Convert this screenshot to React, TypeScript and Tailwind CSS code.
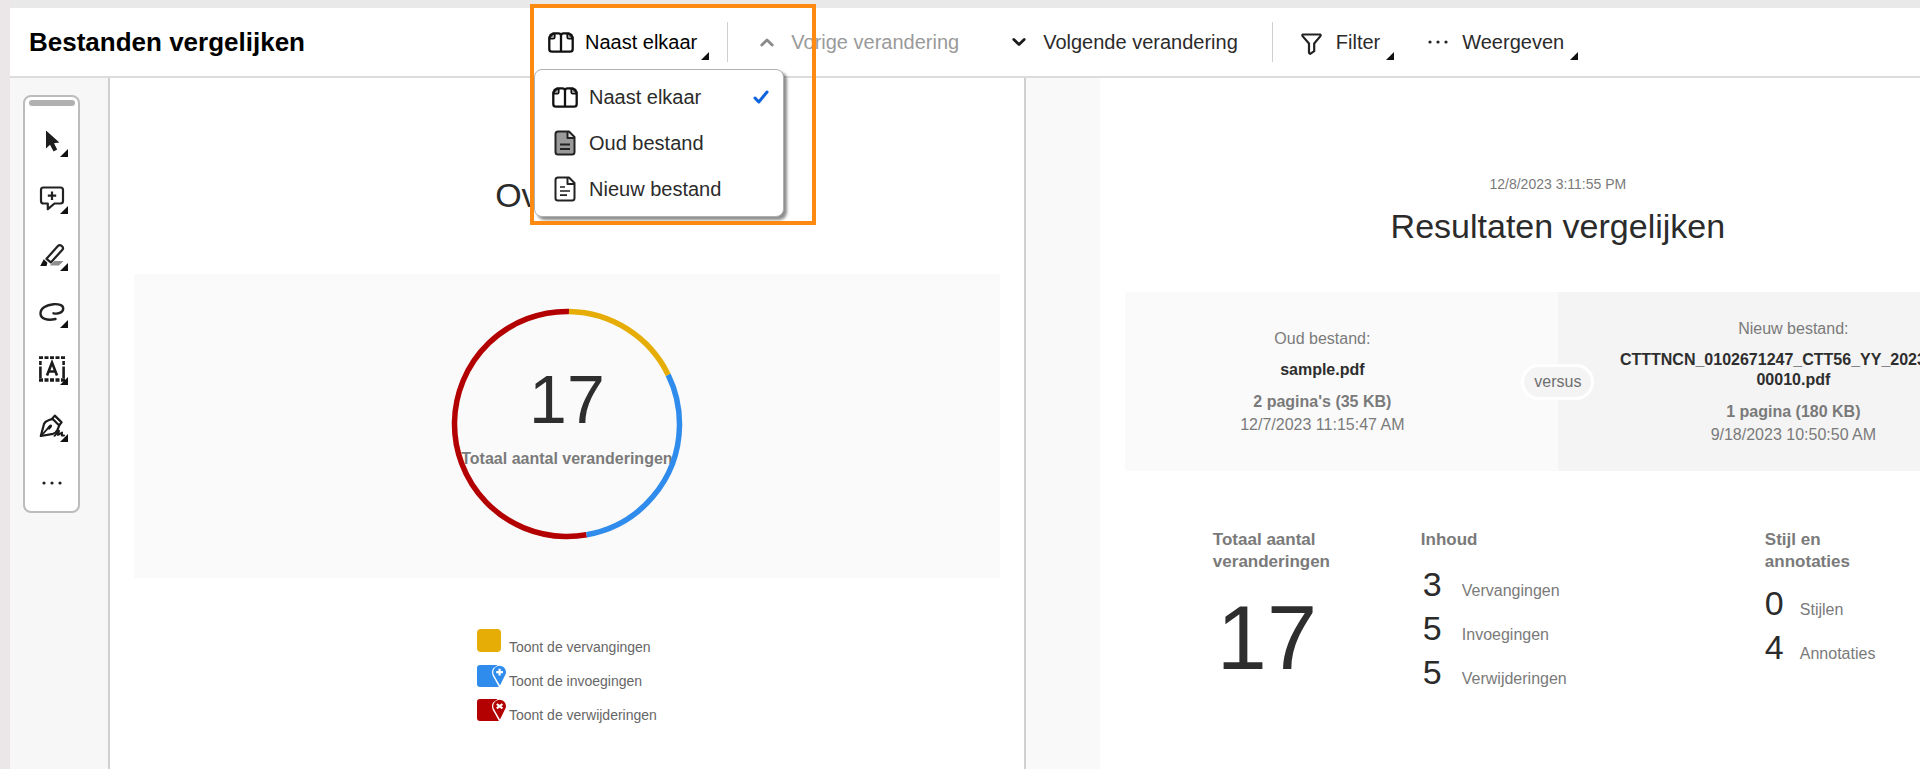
import React from 'react';

type IconProps = { className?: string };

function Corner({ className = '' }: IconProps) {
  return (
    <svg viewBox="0 0 8 8" className={`w-2 h-2 shrink-0 ${className}`} fill="#111" aria-hidden="true">
      <path d="M8 0v8H0z" />
    </svg>
  );
}

function SideBySideIcon() {
  return (
    <svg viewBox="0 0 26 21" className="w-[26px] h-[21px] shrink-0" fill="none" stroke="#111" strokeWidth="2.3" strokeLinejoin="round" aria-hidden="true">
      <path d="M2 6.8H5.2Q6.8 6.8 6.8 5.2V2H4Q2 2 2 4ZM24 6.8H20.8Q19.2 6.8 19.2 5.2V2H22Q24 2 24 4Z" fill="#999" strokeWidth="1.6" />
      <path d="M13 3V19.5" />
      <path d="M13 3.4Q12.6 1.3 10.5 1.3H5.2L1.3 5.2V17Q1.3 19.7 4 19.7H22Q24.7 19.7 24.7 17V5.2L20.8 1.3H15.5Q13.4 1.3 13 3.4Z" />
    </svg>
  );
}

function OldFileIcon() {
  return (
    <svg viewBox="0 0 26 26" className="w-[26px] h-[26px] shrink-0" fill="none" stroke="#222" strokeWidth="2" strokeLinejoin="round" aria-hidden="true">
      <path d="M6.5 1.5H17L22.5 7V22Q22.5 24.5 20 24.5H6Q3.5 24.5 3.5 22V4Q3.5 1.5 6 1.5Z" fill="#9a9a9a" />
      <path d="M15.5 2V8H22" fill="#ddd" />
      <path d="M8 14.5H18M8 19H18" strokeWidth="1.8" />
    </svg>
  );
}

function NewFileIcon() {
  return (
    <svg viewBox="0 0 26 26" className="w-[26px] h-[26px] shrink-0" fill="none" stroke="#222" strokeWidth="2" strokeLinejoin="round" aria-hidden="true">
      <path d="M6.5 1.5H17L22.5 7V22Q22.5 24.5 20 24.5H6Q3.5 24.5 3.5 22V4Q3.5 1.5 6 1.5Z" />
      <path d="M15.5 2V8H22" />
      <path d="M8 11H13M8 15H18M8 19.2H15" strokeWidth="1.7" />
    </svg>
  );
}

function Chevron({ up = false }: { up?: boolean }) {
  return (
    <svg viewBox="0 0 14 10" className="w-3.5 h-2.5 shrink-0" fill="none" stroke={up ? '#8a8a8a' : '#1b1b1b'} strokeWidth="2.8" strokeLinecap="round" strokeLinejoin="round" aria-hidden="true">
      <path d={up ? 'M1.8 8L7 3L12.2 8' : 'M1.8 2.5L7 7.5L12.2 2.5'} />
    </svg>
  );
}

function FilterIcon() {
  return (
    <svg viewBox="0 0 21 22" className="w-[21px] h-[22px] mt-1 shrink-0" fill="none" stroke="#222" strokeWidth="2.2" strokeLinejoin="round" aria-hidden="true">
      <path d="M1.6 1.5H19.4Q20 2.4 19.2 3.4L13.2 10.5V18.2L9.2 20.8Q8 20.6 8 19.6V10.5L1.8 3.4Q1 2.4 1.6 1.5Z" />
    </svg>
  );
}

function Dots() {
  return (
    <svg viewBox="0 0 20 4" className="w-5 h-1 shrink-0" fill="#222" aria-hidden="true">
      <circle cx="2" cy="2" r="1.6" />
      <circle cx="10" cy="2" r="1.6" />
      <circle cx="18" cy="2" r="1.6" />
    </svg>
  );
}

const viewOptions = [
  { label: 'Naast elkaar', icon: <SideBySideIcon />, active: true },
  { label: 'Oud bestand', icon: <OldFileIcon />, active: false },
  { label: 'Nieuw bestand', icon: <NewFileIcon />, active: false }
];

const tools = [
  {
    label: 'Selecteren',
    drawing: <path d="M7 2.5V20.5L11 16.8L14.6 23.4L18.2 21.6L15 15.2L20.4 14.4Z" fill="#1d1d1d" />
  },
  {
    label: 'Opmerking toevoegen',
    drawing: (
      <g fill="none" stroke="#222" strokeWidth="2.2">
        <path d="M4.5 2.5H21.5Q24 2.5 24 5V16Q24 18.5 21.5 18.5H15.5L8.8 24.2V18.5H4.5Q2 18.5 2 16V5Q2 2.5 4.5 2.5Z" strokeLinejoin="round" />
        <path d="M13 6.5V15M8.8 10.7H17.2" />
      </g>
    )
  },
  {
    label: 'Markeren',
    drawing: (
      <g>
        <path d="M15.5 19H24.5L20 23.5H10.5Z" fill="#8f8f8f" />
        <path d="M7.5 16.8L18.9 4Q20.6 2.2 22.6 3.9L23 4.2Q25 6 23.2 8L11.8 20.4Z" fill="none" stroke="#222" strokeWidth="2.2" strokeLinejoin="round" />
        <path d="M4.8 17.2L8.4 20.8L7.6 24H1.2Z" fill="#111" />
      </g>
    )
  },
  {
    label: 'Lasso',
    drawing: (
      <path d="M14.5 14.3C20 15.5 24.2 13 24.2 9.4C24.2 6 19.5 4.8 14.5 5.2C7.5 5.8 1.5 9 1.5 14.5C1.5 19.5 8 22 16.5 20" fill="none" stroke="#222" strokeWidth="2.4" strokeLinecap="round" />
    )
  },
  {
    label: 'Tekst toevoegen',
    drawing: (
      <g fill="none" stroke="#1b1b1b">
        <path d="M0 1.6H26" strokeWidth="2.6" strokeDasharray="4 1.5" />
        <path d="M0 24H26" strokeWidth="3.6" strokeDasharray="4 1.5" />
        <path d="M1.4 5V9M1.4 10.5V22M24.6 5V9M24.6 10.5V22" strokeWidth="2.6" />
        <path d="M8 19.5L13 6.5L18 19.5M9.6 15.5H16.4" strokeWidth="2.6" />
      </g>
    )
  },
  {
    label: 'Ondertekenen',
    drawing: (
      <g fill="none" stroke="#1b1b1b" strokeWidth="2.2" strokeLinejoin="round" strokeLinecap="round">
        <path d="M1.8 23L5 11Q6 8.5 9 7.5L13.5 5.8L20.2 12.6L18.4 17Q17 20 14 20.8Z" />
        <path d="M13.4 5.4L15.8 2.6L22.6 9.4L20.4 12" />
        <path d="M2 23L10.2 13.8" strokeWidth="1.8" />
        <path d="M10 15L11.6 13" strokeWidth="3" />
        <path d="M15.5 22.8L20 17.8L19 22L23 19.6L22.8 22.6H25" strokeWidth="2" />
      </g>
    )
  }
];

const legend = [
  {
    label: 'Toont de vervangingen',
    drawing: <rect x="0" y="0" width="24" height="23" rx="4" fill="#e5ad05" />
  },
  {
    label: 'Toont de invoegingen',
    drawing: (
      <g>
        <path d="M3 2H22V24H3Q0 24 0 21V5Q0 2 3 2Z" fill="#2f8cec" />
        <path d="M22.5 25L17 15Q13.6 10 16 5.5L22 1H24V25Z" fill="#fff" />
        <path d="M23 22.5L17.8 13.4A6.4 6.4 0 1 1 27.4 13.4Z" fill="#2f8cec" />
        <path d="M22.6 5.7V12.5M19.2 9.1H26" stroke="#fff" strokeWidth="2.2" />
      </g>
    )
  },
  {
    label: 'Toont de verwijderingen',
    drawing: (
      <g>
        <path d="M3 2H22V24H3Q0 24 0 21V5Q0 2 3 2Z" fill="#b30000" />
        <path d="M22.5 25L17 15Q13.6 10 16 5.5L22 1H24V25Z" fill="#fff" />
        <path d="M23 22.5L17.8 13.4A6.4 6.4 0 1 1 27.4 13.4Z" fill="#b30000" />
        <path d="M19.8 7L25.4 11.4M25.4 7L19.8 11.4" stroke="#fff" strokeWidth="2.2" />
      </g>
    )
  }
];

const content = [
  { count: 3, label: 'Vervangingen' },
  { count: 5, label: 'Invoegingen' },
  { count: 5, label: 'Verwijderingen' }
];

const styles = [
  { count: 0, label: 'Stijlen' },
  { count: 4, label: 'Annotaties' }
];

function ViewMenu() {
  return (
    <div role="menu" className="absolute left-1 top-[61px] z-10 w-[250px] py-1 bg-white border border-[#b0b0b0] rounded-lg shadow-[3px_3px_3px_rgba(0,0,0,0.45)]">
      {viewOptions.map((option) => (
        <button
          key={option.label}
          role="menuitemradio"
          aria-checked={option.active}
          className="w-full h-[46px] flex items-center gap-[11px] pl-[17px] pr-3.5 text-left text-xl text-[#2b2b2b]"
        >
          {option.icon}
          <span className="flex-1 whitespace-nowrap">{option.label}</span>
          {option.active && (
            <svg viewBox="0 0 16 14" className="w-4 h-3.5" fill="none" stroke="#0d63dd" strokeWidth="3" strokeLinecap="round" strokeLinejoin="round" aria-hidden="true">
              <path d="M2 8L5.8 12L14 2" />
            </svg>
          )}
        </button>
      ))}
    </div>
  );
}

function Header() {
  return (
    <header className="h-[70px] flex items-stretch bg-white border-b-2 border-[#dcdcdc]">
      <h1 className="w-[520px] shrink-0 pl-[19px] flex items-center text-[26px] font-bold text-black">
        Bestanden vergelijken
      </h1>
      <div className="relative flex-1 flex items-center pl-[18px] text-xl text-[#2b2b2b] whitespace-nowrap">
        <button className="h-9 flex items-center text-black" aria-haspopup="menu" aria-expanded="true">
          <SideBySideIcon />
          <span className="ml-[11px]">Naast elkaar</span>
          <Corner className="self-end ml-1" />
        </button>
        <span className="w-px h-10 ml-[18px] bg-[#cfcfcf]" />
        <button className="h-9 flex items-center gap-[17px] ml-8 text-[#9a9a9a]" disabled>
          <Chevron up />
          Vorige verandering
        </button>
        <button className="h-9 flex items-center gap-[17px] ml-[53px]">
          <Chevron />
          Volgende verandering
        </button>
        <span className="w-px h-10 ml-[34px] bg-[#cfcfcf]" />
        <button className="h-9 flex items-center ml-7">
          <FilterIcon />
          <span className="ml-3.5">Filter</span>
          <Corner className="self-end ml-1.5" />
        </button>
        <button className="h-9 flex items-center ml-[34px]">
          <Dots />
          <span className="ml-3.5">Weergeven</span>
          <Corner className="self-end ml-1.5" />
        </button>

        <ViewMenu />
        {/* Highlight around the view selector */}
        <div className="absolute left-0 -top-1 z-20 w-[286px] h-[221px] border-4 border-[#ff8a12] pointer-events-none" />
      </div>
    </header>
  );
}

function ToolPalette() {
  return (
    <aside className="w-[100px] shrink-0 bg-[#f7f7f7] border-r-2 border-[#d0d0d0] pt-[17px] pl-[13px]">
      <div className="w-[57px] h-[418px] flex flex-col items-center bg-white border-2 border-[#bcbcbc] rounded-lg pt-[3px]">
        <div className="w-[46px] h-1.5 rounded-full bg-[#b0b0b0]" />
        <div className="flex flex-col w-full mt-1.5">
          {tools.map((tool) => (
            <button key={tool.label} aria-label={tool.label} className="relative h-[57px] flex items-center justify-center">
              <svg viewBox="0 0 26 26" className="w-[26px] h-[26px]" aria-hidden="true">
                {tool.drawing}
              </svg>
              <Corner className="absolute right-2.5 bottom-3" />
            </button>
          ))}
          <button aria-label="Meer" className="h-[57px] flex items-center justify-center">
            <Dots />
          </button>
        </div>
      </div>
    </aside>
  );
}

function ChangesRing() {
  return (
    <div className="relative w-[232px] h-[232px] flex flex-col items-center">
      <svg viewBox="0 0 232 232" className="absolute inset-0 w-full h-full" fill="none" strokeWidth="5.5" aria-hidden="true">
        <g transform="rotate(-89 116 116)">
          <circle cx="116" cy="116" r="112.5" stroke="#b30000" pathLength="360" strokeDasharray="0 169 191" />
          <circle cx="116" cy="116" r="112.5" stroke="#2f8cec" pathLength="360" strokeDasharray="0 63 106 191" />
          <circle cx="116" cy="116" r="112.5" stroke="#e5ad05" pathLength="360" strokeDasharray="63 297" />
        </g>
      </svg>
      <div className="mt-14 text-[68px] leading-[70px] text-[#2e2e2e]">17</div>
      <div className="mt-[15px] text-base leading-5 font-bold text-[#7a7a7a] whitespace-nowrap">
        Totaal aantal veranderingen
      </div>
    </div>
  );
}

function OldFilePane() {
  return (
    <section className="w-[50.6%] shrink-0 bg-white border-r-2 border-[#d0d0d0] pt-[97px] px-6">
      <h2 className="text-center text-[34px] leading-10 text-[#2b2b2b]">Overzicht</h2>
      <div className="mt-[59px] h-[304px] flex justify-center pt-[34px] bg-[#fafafa]">
        <ChangesRing />
      </div>
      <ul className="mt-[51px] mx-auto w-fit">
        {legend.map((item) => (
          <li key={item.label} className="h-[34px] flex gap-[3px]">
            <svg viewBox="0 0 29 25" className="w-[29px] h-[25px] shrink-0" aria-hidden="true">
              {item.drawing}
            </svg>
            <span className="pt-2.5 text-sm leading-4 text-[#666]">{item.label}</span>
          </li>
        ))}
      </ul>
    </section>
  );
}

type FileCardProps = { title: string; name: React.ReactNode; size: string; date: string; className: string };

function FileCard({ title, name, size, date, className }: FileCardProps) {
  return (
    <div className={`w-1/2 flex flex-col items-center justify-center text-center text-base leading-5 text-[#7a7a7a] ${className}`}>
      <p>{title}</p>
      <p className="mt-[11px] font-bold text-[#2e2e2e] whitespace-nowrap">{name}</p>
      <p className="mt-3 font-bold">{size}</p>
      <p className="mt-[3px]">{date}</p>
    </div>
  );
}

type CountListProps = { items: { count: number; label: string }[]; className: string };

function CountList({ items, className }: CountListProps) {
  return (
    <ul className={className}>
      {items.map((item) => (
        <li key={item.label} className="h-11 flex items-baseline leading-[44px]">
          <span className="text-[34px] text-[#2b2b2b]">{item.count}</span>
          <span className="pl-[inherit] ml-4 text-base leading-[44px] text-[#7a7a7a]">{item.label}</span>
        </li>
      ))}
    </ul>
  );
}

function ResultsPane() {
  return (
    <section className="flex-1 min-w-0 flex overflow-hidden bg-[#f9f9f9]">
      <div className="ml-[74px] w-[916px] shrink-0 bg-white pt-24 px-[25px]">
        <p className="text-center text-sm leading-5 text-[#7a7a7a]">12/8/2023 3:11:55 PM</p>
        <h2 className="mt-3 text-center text-[34px] leading-10 text-[#2b2b2b]">Resultaten vergelijken</h2>

        <div className="relative mt-[46px] h-[179px] flex">
          <FileCard
            title="Oud bestand:"
            name="sample.pdf"
            size="2 pagina's (35 KB)"
            date="12/7/2023 11:15:47 AM"
            className="pr-[38px] bg-[#fafafa]"
          />
          <FileCard
            title="Nieuw bestand:"
            name={<>CTTTNCN_0102671247_CTT56_YY_20230918-<br />00010.pdf</>}
            size="1 pagina (180 KB)"
            date="9/18/2023 10:50:50 AM"
            className="pl-[38px] bg-[#f4f4f4]"
          />
          <div className="absolute inset-0 flex items-center justify-center">
            <span className="h-9 px-[10px] flex items-center rounded-full border-[3px] border-white bg-[#f4f4f4] text-base text-[#6e6e6e]">
              versus
            </span>
          </div>
        </div>

        <div className="mt-[58px] pl-[88px] flex">
          <div className="w-52">
            <h3 className="text-[17px] leading-[22px] font-bold text-[#7a7a7a]">Totaal aantal<br />veranderingen</h3>
            <p className="mt-[18px] pl-1 text-[90px] leading-[94px] text-[#2e2e2e]">17</p>
          </div>
          <div className="w-[344px]">
            <h3 className="text-[17px] leading-[22px] font-bold text-[#7a7a7a]">Inhoud</h3>
            <CountList items={content} className="mt-[11px] pl-0.5 [&_li]:gap-1" />
          </div>
          <div>
            <h3 className="text-[17px] leading-[22px] font-bold text-[#7a7a7a]">Stijl en<br />annotaties</h3>
            <CountList items={styles} className="mt-2" />
          </div>
        </div>
      </div>
    </section>
  );
}

export default function App() {
  return (
    <div className="min-h-screen flex flex-col overflow-hidden border-l-[10px] border-[#ebe7e8] bg-white font-['Liberation_Sans',Arial,sans-serif]">
      <div className="h-2 bg-[#e9e9e9]" />
      <Header />
      <main className="flex-1 flex">
        <ToolPalette />
        <div className="flex-1 min-w-0 flex">
          <OldFilePane />
          <ResultsPane />
        </div>
      </main>
    </div>
  );
}
